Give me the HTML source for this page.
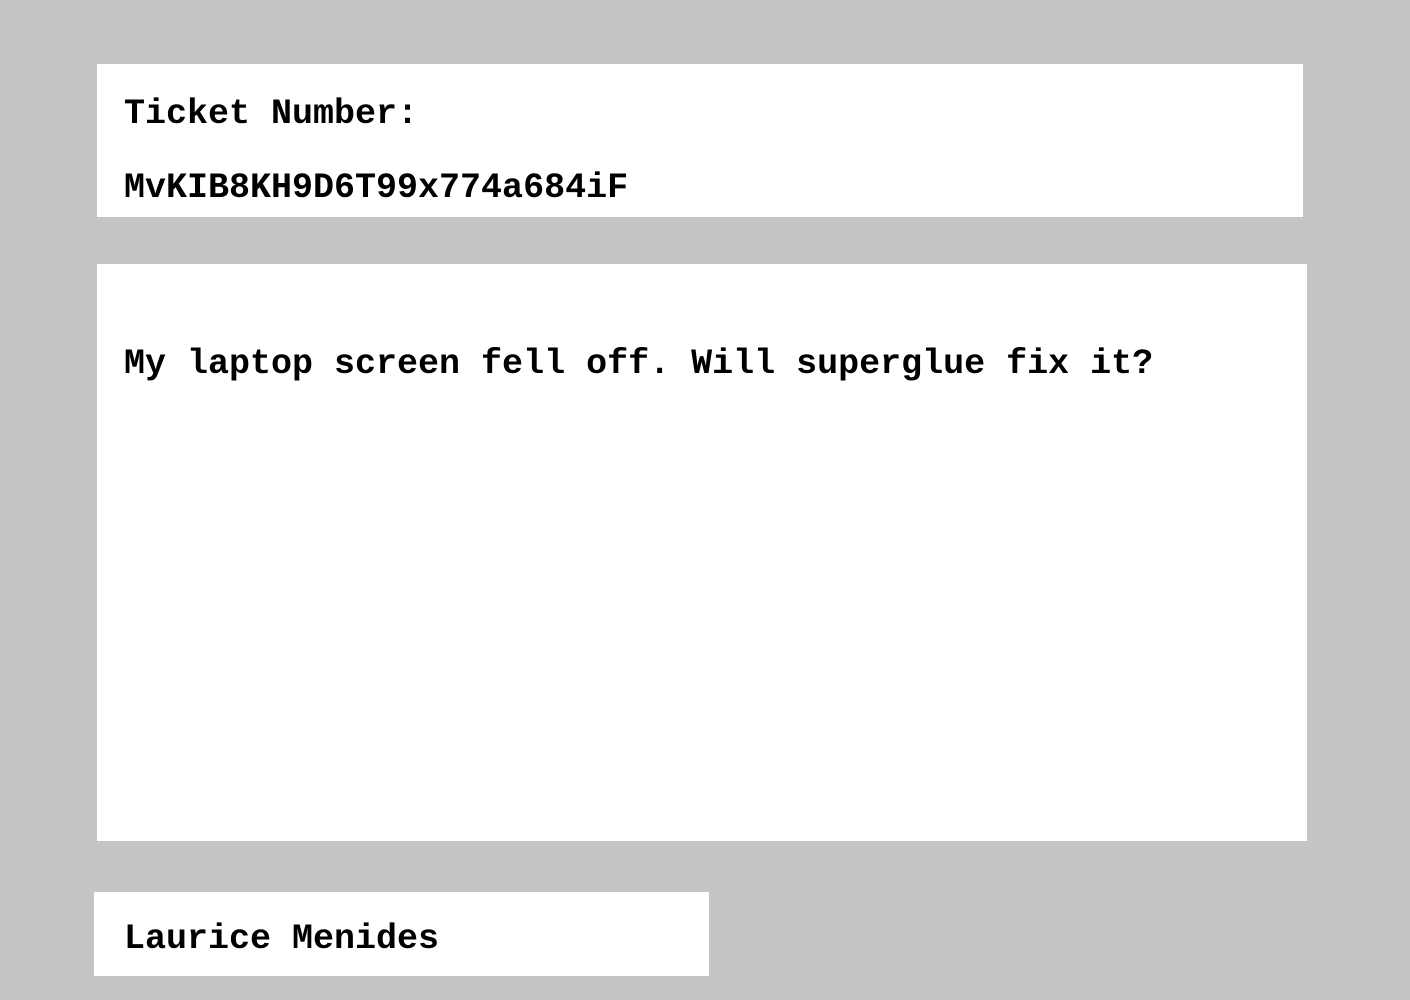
<!DOCTYPE html>
<html><head><style>
body{margin:0;width:1410px;height:1000px;background:#c6c5c3;position:relative;overflow:hidden;font-family:"Liberation Mono",monospace;font-weight:bold;color:#000}
.b{position:absolute;background:#fff}
.t{position:absolute;left:124px;font-size:35px;line-height:35px;white-space:pre}
</style></head><body>
<div class="b" style="left:97px;top:64px;width:1206px;height:153px"></div>
<div class="b" style="left:97px;top:264px;width:1210px;height:577px"></div>
<div class="b" style="left:94px;top:892px;width:615px;height:84px"></div>
<div class="t" style="top:97px">Ticket Number:</div>
<div class="t" style="top:171px">MvKIB8KH9D6T99x774a684iF</div>
<div class="t" style="top:347px">My laptop screen fell off. Will superglue fix it?</div>
<div class="t" style="top:922px">Laurice Menides</div>
</body></html>
